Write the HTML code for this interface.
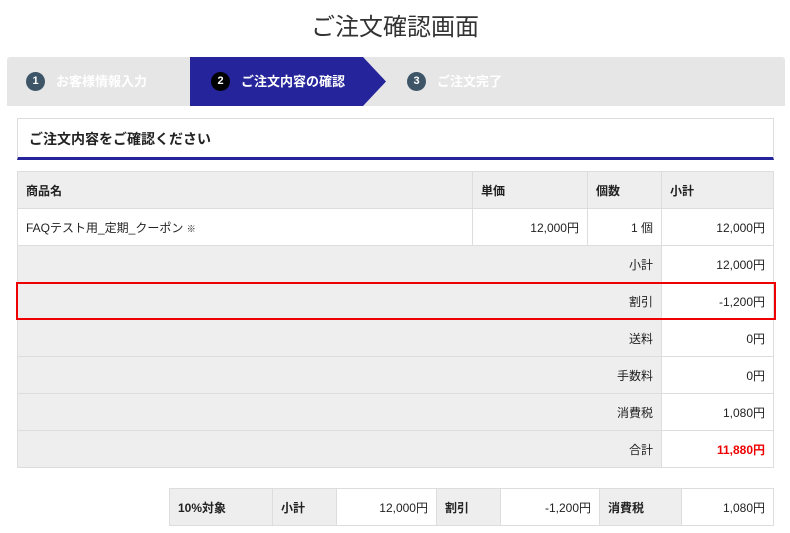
<!DOCTYPE html>
<html><head><meta charset="utf-8"><style>
*{margin:0;padding:0;box-sizing:border-box}
body{width:790px;height:533px;background:#fff;font-family:"Liberation Sans","Noto Sans CJK JP",sans-serif;color:#333;position:relative;overflow:hidden;font-size:12px}
.abs{position:absolute}
h1{position:absolute;top:7px;left:0;width:790px;text-align:center;font-size:24px;font-weight:normal;color:#333}
.steps{left:7px;top:57px;width:778px;height:49px;background:#e6e6e6;border-radius:3px 3px 0 0}
.st{position:absolute;top:0;height:49px;line-height:49px;color:#fff;font-size:13px;font-weight:bold}
.num{display:inline-block;width:19px;height:19px;border-radius:50%;background:#3e5568;color:#fff;font-size:11px;font-weight:bold;line-height:19px;text-align:center;margin-right:11px;vertical-align:middle;position:relative;top:-1px}
.box{left:17px;top:118px;width:757px;height:42px;border:1px solid #ddd;border-bottom:3px solid #25249a;font-weight:bold;font-size:14px;padding:10px 11px;color:#222}
table{position:absolute;border-collapse:collapse;font-size:12px}
td{border:1px solid #ddd;height:37px;padding:0 8px;color:#222}
.g{background:#eee}
.r{text-align:right}
.b{font-weight:bold}
</style></head><body>
<h1>ご注文確認画面</h1>
<div class="abs steps">
 <div class="st" style="left:19px"><span class="num">1</span>お客様情報入力</div>
 <svg class="abs" style="left:183px;top:0" width="196" height="49"><polygon points="0,0 173,0 196,24.5 173,49 0,49" fill="#25249a"/></svg>
 <div class="st" style="left:204px"><span class="num" style="background:#000">2</span>ご注文内容の確認</div>
 <div class="st" style="left:400px"><span class="num">3</span>ご注文完了</div>
</div>
<div class="abs box">ご注文内容をご確認ください</div>
<table style="left:17px;top:171px;width:757px">
<tr class="g b"><td style="width:455px">商品名</td><td style="width:115px">単価</td><td style="width:74px">個数</td><td>小計</td></tr>
<tr><td>FAQテスト用_定期_クーポン <span style="font-size:9px">※</span></td><td class="r">12,000円</td><td class="r">1 個</td><td class="r">12,000円</td></tr>
<tr><td colspan="3" class="g r">小計</td><td class="r">12,000円</td></tr>
<tr><td colspan="3" class="g r">割引</td><td class="r">-1,200円</td></tr>
<tr><td colspan="3" class="g r">送料</td><td class="r">0円</td></tr>
<tr><td colspan="3" class="g r">手数料</td><td class="r">0円</td></tr>
<tr><td colspan="3" class="g r">消費税</td><td class="r">1,080円</td></tr>
<tr><td colspan="3" class="g r">合計</td><td class="r b" style="color:#e00">11,880円</td></tr>
</table>
<div class="abs" style="left:16px;top:282px;width:760px;height:38px;border:2px solid #e00"></div>
<table style="left:169px;top:488px;width:605px">
<tr><td class="g b" style="width:103px">10%対象</td><td class="g b" style="width:64px">小計</td><td class="r" style="width:100px">12,000円</td><td class="g b" style="width:64px">割引</td><td class="r" style="width:99px">-1,200円</td><td class="g b" style="width:82px">消費税</td><td class="r">1,080円</td></tr>
</table>
</body></html>
